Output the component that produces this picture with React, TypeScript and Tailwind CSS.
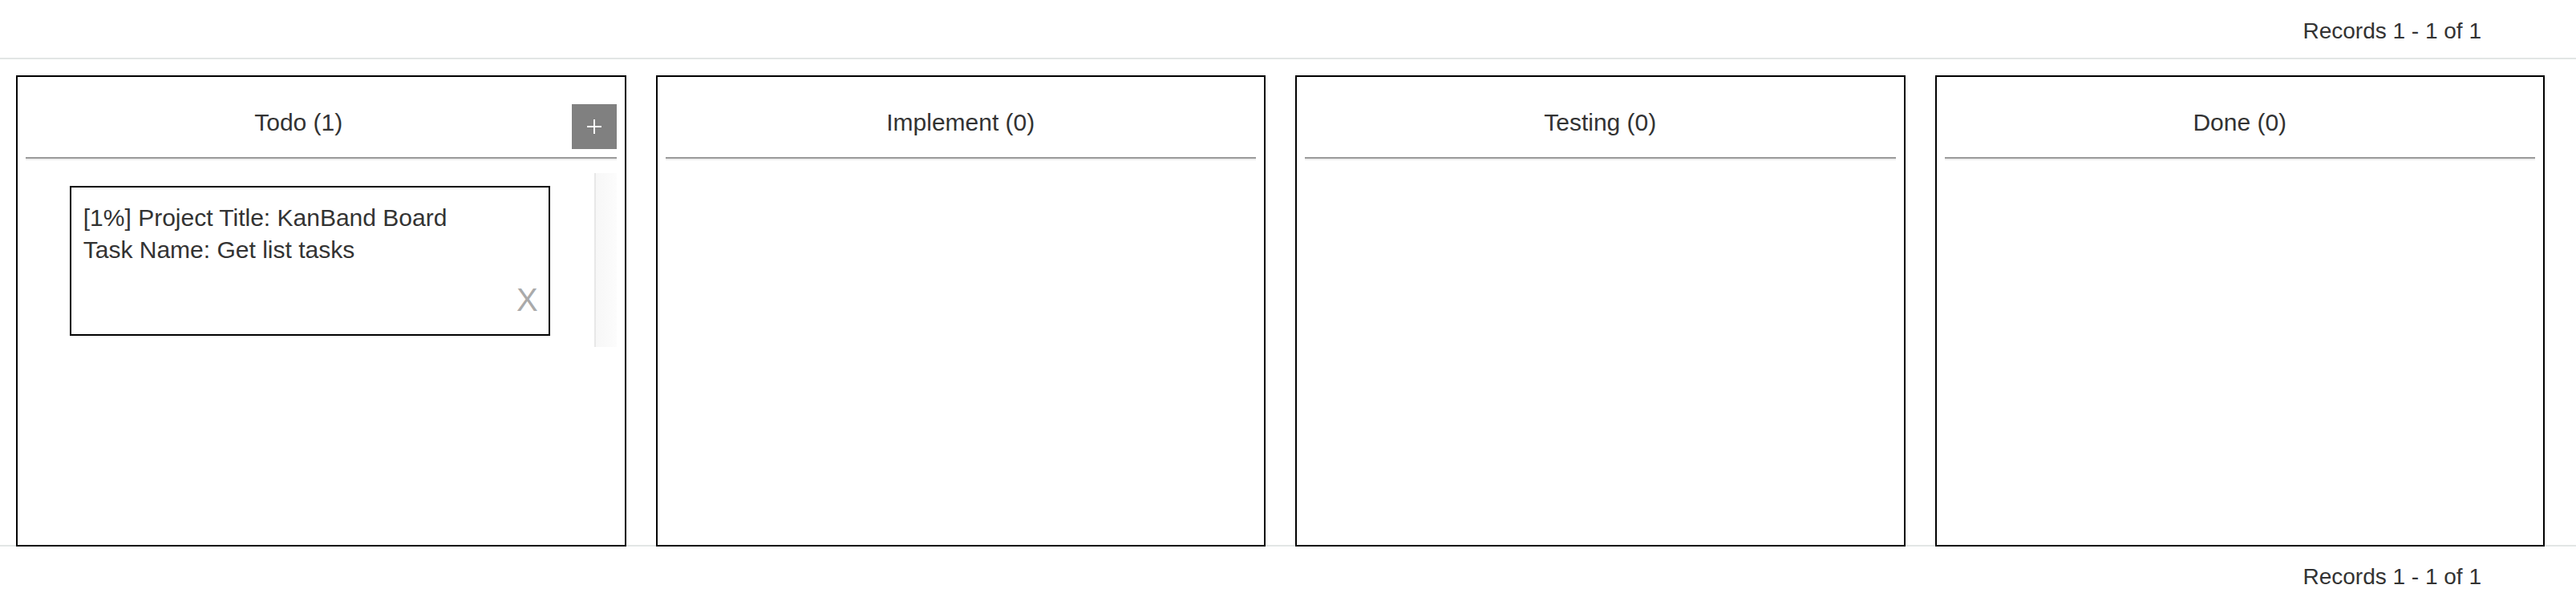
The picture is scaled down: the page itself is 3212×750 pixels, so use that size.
import React from 'react';

// ---------------------------------------------------------------------------
// Data
// ---------------------------------------------------------------------------

interface Task {
  id: number;
  progress: number;
  project: string;
  name: string;
}

interface Lane {
  key: string;
  title: string;
  canAdd?: boolean;
  tasks: Task[];
}

const lanes: Lane[] = [
  {
    key: 'todo',
    title: 'Todo',
    canAdd: true,
    tasks: [{ id: 1, progress: 1, project: 'KanBand Board', name: 'Get list tasks' }],
  },
  { key: 'implement', title: 'Implement', tasks: [] },
  { key: 'testing', title: 'Testing', tasks: [] },
  { key: 'done', title: 'Done', tasks: [] },
];

// ---------------------------------------------------------------------------
// Pieces
// ---------------------------------------------------------------------------

function Records() {
  return <span className="text-[28px] leading-[40px] text-[#333]">Records 1 - 1 of 1</span>;
}

function AddButton() {
  return (
    <button className="flex h-[56px] w-[56px] shrink-0 items-center justify-center bg-[#808080]">
      <svg width="18" height="18" viewBox="0 0 18 18" fill="none" stroke="#fff" strokeWidth={2}>
        <path d="M9 0v18M0 9h18" />
      </svg>
    </button>
  );
}

function TaskCard({ task }: { task: Task }) {
  return (
    <div className="flex h-[187px] w-[599px] flex-col border-2 border-black bg-white pl-[15px] pr-[13px] pt-[18px] text-[30px] leading-[40px] text-[#333]">
      <div>
        [{task.progress}%] Project Title: {task.project}
      </div>
      <div>Task Name: {task.name}</div>
      <div className="mt-[22px] flex justify-end">
        <span className="cursor-pointer text-[40px] leading-[40px] text-[#aaa]">X</span>
      </div>
    </div>
  );
}

function LaneColumn({ lane }: { lane: Lane }) {
  return (
    <div className="relative -mb-[2px] flex h-[588px] min-w-0 flex-1 flex-col border-2 border-black bg-white">
      <div className="flex h-[90px] items-start px-[10px] pt-[34px]">
        <h2 className="mt-[3px] flex-1 text-center text-[30px] font-normal leading-[40px] text-[#333]">
          {lane.title} ({lane.tasks.length})
        </h2>
        {lane.canAdd && <AddButton />}
      </div>
      <div className="mx-[10px] mt-[10px] h-[4px] border-t-2 border-b-2 border-t-[#9a9a9a] border-b-[#eeeeee]" />

      {lane.tasks.length > 0 && (
        <div className="mx-[10px] mt-[16px] flex h-[217px] pr-[-1px]">
          <div className="flex flex-1 flex-col items-center pt-[16px]">
            {lane.tasks.map((t) => (
              <TaskCard key={t.id} task={t} />
            ))}
          </div>
          {/* empty scrollbar track */}
          <div className="w-[28px] border-l-2 border-[#e8e8e8] bg-gradient-to-r from-[#f7f7f7] to-[#fcfcfc]" />
        </div>
      )}
    </div>
  );
}

// ---------------------------------------------------------------------------
// App
// ---------------------------------------------------------------------------

export default function App() {
  return (
    <div className="min-h-screen w-full bg-white" style={{ fontFamily: '"Liberation Sans", Arial, sans-serif' }}>
      <div className="flex h-[74px] justify-end border-b-2 border-[#e2e6e5] pr-[118px] pt-[19px]">
        <Records />
      </div>

      <div className="flex gap-[37px] border-b-2 border-[#e2e6e5] pl-[20px] pr-[39px] pt-[20px]">
        {lanes.map((lane) => (
          <LaneColumn key={lane.key} lane={lane} />
        ))}
      </div>

      <div className="flex justify-end pr-[118px] pt-[18px]">
        <Records />
      </div>
    </div>
  );
}
